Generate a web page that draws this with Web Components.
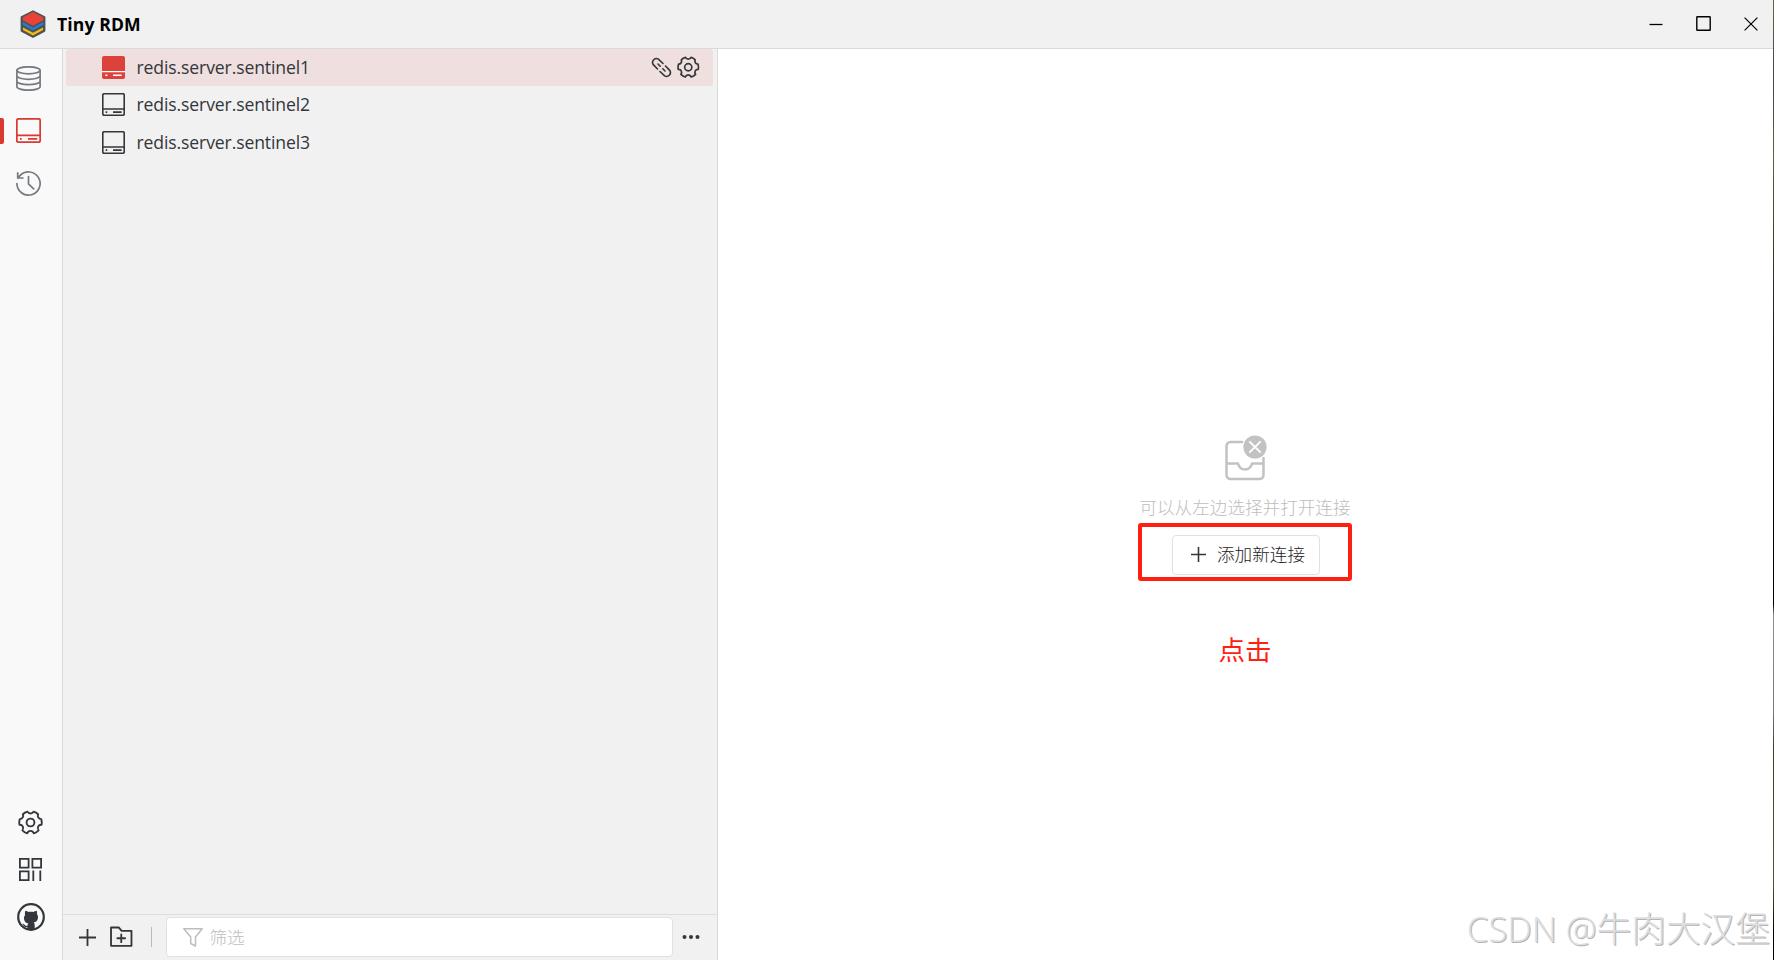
<!DOCTYPE html>
<html lang="zh-CN">
<head>
<meta charset="utf-8">
<title>Tiny RDM</title>
<style>
  html, body {
    margin: 0;
    height: 100%;
    overflow: hidden;
  }
  body {
    font-family: "Open Sans", "Noto Sans CJK SC", sans-serif;
    font-size: 17.6px;
    color: #33363a;
    background: #fff;
    --border: #d9dadb;
    --panel: #f1f1f1;
    --primary: #d83a32;
  }
</style>
</head>
<body>
<rdm-app>
  <title-bar slot="header">Tiny RDM</title-bar>
  <side-rail slot="rail">
    <rail-item icon="database"></rail-item>
    <rail-item icon="server" active></rail-item>
    <rail-item icon="history"></rail-item>
    <rail-item slot="bottom" icon="gear"></rail-item>
    <rail-item slot="bottom" icon="qrcode"></rail-item>
    <rail-item slot="bottom" icon="github"></rail-item>
  </side-rail>
  <connection-panel slot="panel">
    <connection-row selected>redis.server.sentinel1</connection-row>
    <connection-row>redis.server.sentinel2</connection-row>
    <connection-row>redis.server.sentinel3</connection-row>
    <filter-bar slot="footer">筛选</filter-bar>
  </connection-panel>
  <empty-pane>
    可以从左边选择并打开连接
    <add-button slot="action">添加新连接</add-button>
    <span slot="note">点击</span>
  </empty-pane>
  <water-mark slot="overlay">CSDN @牛肉大汉堡</water-mark>
</rdm-app>

<script>
const ICONS = {
  logo: {
    box: "0 0 26 28",
    body: `<path d="M13 1.3 24.4 7.2v13.6L13 26.900 1.600 20.800V7.200z" fill="#4c5459" stroke="#4c5459" stroke-width="2" stroke-linejoin="round"/>
      <path d="M13 25.600 3 20v-2.600L13 22.800l10-5.400V20z" fill="#f9bc0a"/>
      <path d="M13 20.300 2.600 14.600v-2.500L13 17.800l10.400-5.700v2.500z" fill="#1f7fe0"/>
      <path d="M13 2 23.200 7.300v2.900L13 15.800 2.800 10.200V7.300z" fill="#ea4335"/>`,
  },
  database: {
    box: "0 0 25 25",
    body: `<g fill="none" stroke="currentColor" stroke-width="1.7"><ellipse cx="12.5" cy="4.3" rx="11.6" ry="3.5"/>
      <path d="M.9 4.300v16.400c0 1.900 5.200 3.500 11.600 3.500s11.600-1.600 11.600-3.500V4.300M.9 9.800c0 1.900 5.200 3.500 11.600 3.500s11.600-1.600 11.600-3.500M.9 15.200c0 1.900 5.200 3.500 11.600 3.500s11.600-1.600 11.600-3.500"/></g>`,
  },
  server: {
    box: "0 0 24 24",
    body: `<g fill="none" stroke="currentColor" stroke-width="1.7"><rect x=".8" y=".8" width="22.4" height="22.4" rx="1.5"/>
      <path d="M1 16.700h22M3.800 20h1.700M11.500 20h9"/></g>`,
  },
  serverFilled: {
    box: "0 0 24 24",
    body: `<rect width="24" height="24" rx="2" fill="currentColor"/>
      <path d="M0 16.300h24M3.500 20h2.200M11.500 20h9" stroke="#fff" stroke-width="1.500"/>`,
  },
  history: {
    box: "0 0 25 25",
    body: `<path d="M.9 12.500a11.600 11.600 0 1 0 3.300-8.100L1.700 7M1.700 1.800V7h5.200M12.500 5.500v7.300l5.200 5" fill="none" stroke="currentColor" stroke-width="1.700" stroke-linecap="round" stroke-linejoin="round"/>`,
  },
  gear: {
    box: "0 0 48 48",
    body: `<g fill="none" stroke="currentColor" stroke-width="3.3" stroke-linejoin="round"><path d="M18.284 43.171a19.995 19.995 0 0 1-8.696-5.304 6 6 0 0 0-5.182-9.838A20.090 20.090 0 0 1 4 24c0-2.090.320-4.106.916-6H5a6 6 0 0 0 5.385-8.650 19.968 19.968 0 0 1 8.267-4.627A6 6 0 0 0 24 8a6 6 0 0 0 5.348-3.277 19.968 19.968 0 0 1 8.267 4.627A6 6 0 0 0 43.084 18c.595 1.894.916 3.910.916 6 0 1.380-.140 2.728-.406 4.030a6 6 0 0 0-5.182 9.838 19.995 19.995 0 0 1-8.696 5.303 6.003 6.003 0 0 0-11.432 0Z"/><circle cx="24" cy="24" r="7"/></g>`,
  },
  qrcode: {
    box: "0 0 23 23",
    body: `<g fill="none" stroke="currentColor" stroke-width="1.8"><path d="M.9.9H9.600V9.600H.9zM13.400.9h8.700V9.600h-8.700zM.9 13.400H9.600v8.700H.9z"/><path d="M14.300 12.500V23M21.300 12.500V23"/></g>`,
  },
  github: {
    box: "0 0 28 28",
    body: `<circle cx="14" cy="14" r="12.8" fill="none" stroke="currentColor" stroke-width="2.2"/>
      <path d="M8.300 7.800c1.300.1 2.400.7 3.200 1.300 1.600-.4 3.400-.4 5 0 .8-.6 1.900-1.200 3.200-1.300.5 1.100.5 2.200.2 3.200 1 1.200 1.300 2.700 1 4.300-.4 2.500-1.900 3.800-4.300 4.300.9.800 1.100 1.700 1.100 3v4.200h-7.400v-2.900c-2 .4-3.200-.2-3.900-1.700-.4-.7-.8-1.200-1.400-1.500 1.400-.3 2.300.4 3 1.400.6.8 1.300 1 2.400.7.100-1 .4-1.700 1-2.200-2.400-.5-3.900-1.800-4.300-4.300-.3-1.600 0-3.100 1-4.300-.3-1-.3-2.100.2-4.200z" fill="currentColor"/>`,
  },
  unlink: {
    box: "0 0 21 21",
    body: `<g fill="none" stroke="currentColor" stroke-width="1.6" stroke-linecap="round"><path d="M6.500 12 2.100 7.400a3.900 3.900 0 0 1 5.300-5.300L12 6.500M14.500 9l4.400 4.600a3.900 3.900 0 0 1-5.300 5.300L9 14.500M7 7l2.200 2.200M11.800 11.800 14 14"/></g>`,
  },
  plus: {
    box: "0 0 16 16",
    body: `<path d="M8 0v16M0 8h16" stroke="currentColor" stroke-width="1.7"/>`,
  },
  folder: {
    box: "0 0 22 21",
    body: `<path d="M1 19.400V1.500h7.700l2.700 3.200H21v14.700zM11 8.200v7.600M7.200 12h7.600" fill="none" stroke="currentColor" stroke-width="1.8" stroke-linejoin="round" stroke-linecap="round"/>`,
  },
  funnel: {
    box: "0 0 20 19",
    body: `<path d="M.8.800h18.400L12.500 9v9l-4.800-2.500V9z" fill="none" stroke="currentColor" stroke-width="1.5" stroke-linejoin="round"/>`,
  },
  dots: {
    box: "0 0 18 4",
    body: `<g fill="currentColor"><circle cx="2.5" cy="2" r="2"/><circle cx="9" cy="2" r="2"/><circle cx="15.5" cy="2" r="2"/></g>`,
  },
  minimize: {
    box: "0 0 14 14",
    body: `<path d="M.5 7.500h13" stroke="currentColor" stroke-width="1.3"/>`,
  },
  maximize: {
    box: "0 0 15 15",
    body: `<rect x=".8" y=".8" width="13.4" height="13.4" rx=".5" fill="none" stroke="currentColor" stroke-width="1.4"/>`,
  },
  close: {
    box: "0 0 14 14",
    body: `<path d="M.6.600l12.800 12.800M13.400.600.6 13.400" stroke="currentColor" stroke-width="1.2"/>`,
  },
  empty: {
    box: "0 0 42 46",
    body: `<g fill="none" stroke="currentColor" stroke-width="2.5" stroke-linecap="round" stroke-linejoin="round"><path d="M17 7H5.500A4 4 0 0 0 1.500 11v29a4 4 0 0 0 4 4h29a4 4 0 0 0 4-4V23M1.500 28.500h11.500c1 3.800 3.500 6 7 6s6-2.200 7-6h11.500"/></g>
      <circle cx="30" cy="12" r="11.600" fill="currentColor"/><path d="m24.300 6.300 11.400 11.400M35.700 6.300 24.300 17.700" stroke="#fff" stroke-width="1.900"/>`,
  },
};

/** Base class: attaches an open root and fills it from render() */
class BaseElement extends HTMLElement {
  constructor() {
    super();
    this.attachShadow({ mode: "open" });
  }

  connectedCallback() {
    this.shadowRoot.innerHTML = this.render();
  }
}

customElements.define(
  "ui-icon",
  class extends BaseElement {
    render() {
      const icon = ICONS[this.getAttribute("name")];
      const [, , w, h] = icon.box.split(" ");
      const width = this.getAttribute("width") || w;
      const height = (width * h) / w;
      return /*html*/ `
        <style>
          :host { display: block; flex: none; width: ${width}px; height: ${height}px; }
          svg { display: block; width: 100%; height: 100%; }
        </style>
        <svg viewBox="${icon.box}">${icon.body}</svg>
      `;
    }
  }
);

customElements.define(
  "rdm-app",
  class extends BaseElement {
    render() {
      return /*html*/ `
        <style>
          :host {
            display: grid;
            grid-template: 49px 1fr / 63px 655px 1fr 1px;
            width: 100vw;
            height: 100vh;
          }
          ::slotted([slot="header"]) { grid-column: 1 / 4; }
          /* sliver of the desktop behind the window */
          .edge {
            grid-area: 1 / 4 / 3 / 5;
            background: linear-gradient(#5c6a45, #3c4650 8%, #55663c 16%, #20261c 32%, #000 45% 63%, #8c8f8a 64%, #777a74 74%, #35402a 78%, #4a5a36 92%, #000 97%);
          }
        </style>
        <slot name="header"></slot>
        <div class="edge"></div>
        <slot name="rail"></slot>
        <slot name="panel"></slot>
        <slot></slot>
        <slot name="overlay"></slot>
      `;
    }
  }
);

customElements.define(
  "title-bar",
  class extends BaseElement {
    render() {
      return /*html*/ `
        <style>
          :host {
            display: flex;
            align-items: center;
            box-sizing: border-box;
            padding: 0 15px 0 20px;
            background: var(--panel);
            border-bottom: 1px solid var(--border);
            color: #000;
          }
          .title { margin-left: 11px; flex: 1; font-weight: 700; letter-spacing: .1px; }
          .controls { display: flex; align-items: center; gap: 33px; padding-bottom: 1px; }
        </style>
        <ui-icon name="logo"></ui-icon>
        <span class="title"><slot></slot></span>
        <div class="controls">
          <ui-icon name="minimize"></ui-icon>
          <ui-icon name="maximize"></ui-icon>
          <ui-icon name="close"></ui-icon>
        </div>
      `;
    }
  }
);

customElements.define(
  "side-rail",
  class extends BaseElement {
    render() {
      return /*html*/ `
        <style>
          :host {
            display: flex;
            flex-direction: column;
            justify-content: space-between;
            box-sizing: border-box;
            padding: 3px 0 19px;
            background: #f9f9fa;
            border-right: 1px solid var(--border);
          }
          .top { --rail-height: 52.6px; --rail-offset: 9px; color: #757a80; }
          .bottom { --rail-height: 47.6px; --rail-offset: 5px; }
        </style>
        <div class="top"><slot></slot></div>
        <div class="bottom"><slot name="bottom"></slot></div>
      `;
    }
  }
);

customElements.define(
  "rail-item",
  class extends BaseElement {
    render() {
      const name = this.getAttribute("icon");
      const width = { qrcode: 23, github: 28, gear: 27 }[name] || 25;
      return /*html*/ `
        <style>
          :host {
            display: grid;
            grid-template-columns: 4px 1fr;
            align-items: center;
            justify-items: center;
            height: var(--rail-height);
          }
          :host([active]) { color: var(--primary); }
          .mark { width: 4px; height: 26px; border-radius: 0 2px 2px 0; }
          :host([active]) .mark { background: var(--primary); }
          ui-icon { margin-right: var(--rail-offset); }
        </style>
        <span class="mark"></span>
        <ui-icon name="${name}" width="${width}"></ui-icon>
      `;
    }
  }
);

customElements.define(
  "connection-panel",
  class extends BaseElement {
    render() {
      return /*html*/ `
        <style>
          :host {
            display: flex;
            flex-direction: column;
            box-sizing: border-box;
            background: var(--panel);
            border-right: 1px solid var(--border);
          }
          .list { flex: 1; padding: 0 4px 0 3px; }
        </style>
        <div class="list"><slot></slot></div>
        <slot name="footer"></slot>
      `;
    }
  }
);

customElements.define(
  "connection-row",
  class extends BaseElement {
    render() {
      const selected = this.hasAttribute("selected");
      return /*html*/ `
        <style>
          :host {
            display: flex;
            align-items: center;
            height: 37.5px;
            box-sizing: border-box;
            padding: 0 13px 1px 36px;
            border-radius: 4px;
          }
          :host([selected]) { background: linear-gradient(#efdfdf, #efdfdf) no-repeat 0 0 / 100% 37px; }
          :host([selected]) .server { color: #dc423c; }
          .label { flex: 1; margin-left: 11.5px; padding-bottom: 1px; letter-spacing: -.12px; }
          .actions { display: flex; align-items: center; gap: 4px; }
        </style>
        <ui-icon class="server" name="${selected ? "serverFilled" : "server"}" width="23"></ui-icon>
        <span class="label"><slot></slot></span>
        ${
          selected
            ? `<div class="actions"><ui-icon name="unlink"></ui-icon><ui-icon name="gear" width="24.5"></ui-icon></div>`
            : ""
        }
      `;
    }
  }
);

customElements.define(
  "filter-bar",
  class extends BaseElement {
    render() {
      return /*html*/ `
        <style>
          :host {
            display: flex;
            align-items: center;
            height: 46px;
            box-sizing: border-box;
            padding: 0 17px 1px 16px;
            border-top: 1px solid #dcdde2;
          }
          .folder { margin-left: 14px; }
          .divider { width: 1px; height: 20px; margin: 0 14px 0 18px; background: #b9babc; }
          .input {
            display: flex;
            align-items: center;
            flex: 1;
            height: 40px;
            box-sizing: border-box;
            margin-right: 9px;
            padding-left: 16px;
            gap: 7px;
            color: #bdbdbd;
            background: #fff;
            border: 1px solid #e0e0e6;
            border-radius: 4px;
          }
          .placeholder { padding-bottom: 1px; font-weight: 300; }
        </style>
        <ui-icon name="plus" width="17"></ui-icon>
        <ui-icon class="folder" name="folder" width="22.5"></ui-icon>
        <span class="divider"></span>
        <div class="input">
          <ui-icon name="funnel"></ui-icon>
          <span class="placeholder"><slot></slot></span>
        </div>
        <ui-icon name="dots"></ui-icon>
      `;
    }
  }
);

customElements.define(
  "empty-pane",
  class extends BaseElement {
    render() {
      return /*html*/ `
        <style>
          :host {
            display: flex;
            flex-direction: column;
            align-items: center;
            padding: 386px 1px 0 0;
            background: #fff;
          }
          ui-icon { color: #c2c2c2; margin-left: 2px; }
          .hint { margin-top: 12px; line-height: 28px; color: #bdbdbd; font-weight: 300; }
          .frame {
            display: flex;
            justify-content: center;
            align-items: center;
            width: 214px;
            height: 58px;
            margin-top: 2px;
            box-sizing: border-box;
            padding: 5px 0 0 2px;
            border: 4px solid #ff2012;
            border-radius: 3px;
          }
          .note { margin-top: 49px; font-size: 26.5px; line-height: 40px; color: #ff2012; }
        </style>
        <ui-icon name="empty"></ui-icon>
        <div class="hint"><slot></slot></div>
        <div class="frame"><slot name="action"></slot></div>
        <div class="note"><slot name="note"></slot></div>
      `;
    }
  }
);

customElements.define(
  "add-button",
  class extends BaseElement {
    render() {
      return /*html*/ `
        <style>
          :host {
            display: flex;
            align-items: center;
            gap: 11px;
            width: 148px;
            height: 40px;
            box-sizing: border-box;
            padding-left: 18px;
            border: 1px solid #e0e0e6;
            border-radius: 4px;
            white-space: nowrap;
          }
          .text { padding-bottom: 2px; font-weight: 300; color: #1e2023; }
        </style>
        <ui-icon name="plus" width="15"></ui-icon>
        <span class="text"><slot></slot></span>
      `;
    }
  }
);

customElements.define(
  "water-mark",
  class extends BaseElement {
    render() {
      return /*html*/ `
        <style>
          :host {
            position: absolute;
            right: 4px;
            bottom: 6px;
            font: 300 34.7px/50px "Open Sans", "Noto Sans CJK SC", sans-serif;
            white-space: nowrap;
            color: #dedede;
            text-shadow: 1px 1px 0 #b4b4b4;
          }
        </style>
        <slot></slot>
      `;
    }
  }
);
</script>
</body>
</html>
